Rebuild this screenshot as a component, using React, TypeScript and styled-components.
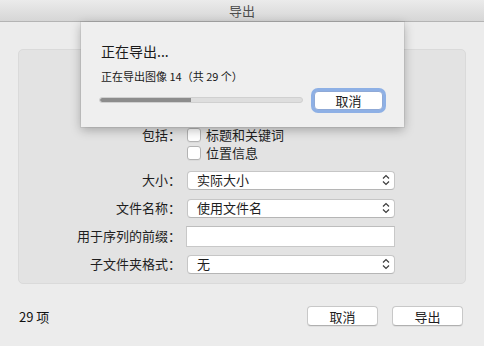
import React from "react";
import styled, { createGlobalStyle } from "styled-components";

const Global = createGlobalStyle`
  html, body { margin: 0; padding: 0; background: #ececec; }
  body { font-family: "Noto Sans CJK SC", "Noto Sans", "Liberation Sans", sans-serif; }
`;

const Window = styled.div`
  position: relative;
  width: 484px;
  height: 346px;
  background: #ececec;
  display: flex;
  flex-direction: column;
  overflow: hidden;
  color: #1e1e1e;
`;

const TitleBar = styled.div`
  height: 21px;
  flex: none;
  display: flex;
  align-items: center;
  justify-content: center;
  background: linear-gradient(#ebebeb, #d6d6d6);
  border-bottom: 1px solid #b4b4b4;
  font-size: 13px;
  color: #4d4d4d;
`;

const Body = styled.div`
  flex: 1;
  display: flex;
  flex-direction: column;
  padding: 27px 18px 0 18px;
`;

const GroupBox = styled.div`
  flex: none;
  height: 235px;
  box-sizing: border-box;
  background: #e3e3e3;
  border: 1px solid #dadada;
  border-radius: 5px;
  padding-top: 76px;
  display: flex;
  flex-direction: column;
`;

const Row = styled.div<{ $h: number; $mt?: number }>`
  display: grid;
  grid-template-columns: 162px 208px;
  column-gap: 6px;
  align-items: center;
  height: ${(p) => p.$h}px;
  margin-top: ${(p) => p.$mt ?? 0}px;
`;

const Label = styled.div`
  text-align: right;
  font-size: 13px;
  line-height: 16px;
  color: #1e1e1e;
`;

const CheckLine = styled.label`
  display: flex;
  align-items: center;
  gap: 5px;
  font-size: 13px;
  line-height: 16px;
`;

const CheckBox = styled.span`
  width: 12px;
  height: 12px;
  background: #fff;
  border: 1px solid #b3b3b3;
  border-radius: 3px;
  box-shadow: 0 1px 0 rgba(0, 0, 0, 0.04);
`;

const Select = styled.div`
  height: 19px;
  box-sizing: border-box;
  background: #fff;
  border: 1px solid #c6c6c6;
  border-bottom-color: #b5b5b5;
  border-radius: 4px;
  display: flex;
  align-items: center;
  justify-content: space-between;
  padding: 0 4px 0 9px;
  font-size: 13px;
  line-height: 16px;
`;

const TextField = styled.div`
  height: 21px;
  box-sizing: border-box;
  background: #fff;
  border: 1px solid #c8c8c8;
  border-top-color: #bdbdbd;
  margin-left: -1px;
`;

const Footer = styled.div`
  display: flex;
  align-items: center;
  margin-top: 22px;
  height: 20px;
  padding: 0 3px 0 1px;
`;

const Count = styled.div`
  flex: 1;
  font-size: 13px;
  color: #111;
`;

const Button = styled.div<{ $focus?: boolean }>`
  width: ${(p) => (p.$focus ? 69 : 71)}px;
  height: ${(p) => (p.$focus ? 19 : 20)}px;
  box-sizing: border-box;
  background: #fff;
  border: 1px solid ${(p) => (p.$focus ? "#8fa9d6" : "#c8c8c8")};
  border-bottom-color: ${(p) => (p.$focus ? "#8fa9d6" : "#b0b0b0")};
  border-radius: 4px;
  display: flex;
  align-items: center;
  justify-content: center;
  font-size: 13px;
  color: #1e1e1e;
  box-shadow: ${(p) =>
    p.$focus ? "0 0 0 3px rgba(110, 155, 225, 0.75)" : "0 1px 0 rgba(0,0,0,0.05)"};
  & + & {
    margin-left: 14px;
  }
`;

const Sheet = styled.div`
  position: absolute;
  left: 81px;
  top: 22px;
  width: 323px;
  height: 105px;
  box-sizing: border-box;
  background: #efefef;
  box-shadow: 0 3px 10px rgba(0, 0, 0, 0.28), 0 0 0 1px rgba(0, 0, 0, 0.06);
  padding: 19px 19px 0 20px;
  display: flex;
  flex-direction: column;
`;

const SheetTitle = styled.div`
  font-size: 14px;
  line-height: 20px;
  color: #1a1a1a;
`;

const SheetSub = styled.div`
  font-size: 11px;
  line-height: 14px;
  margin-top: 8px;
  color: #1a1a1a;
`;

const ProgressRow = styled.div`
  display: flex;
  align-items: center;
  margin-top: 5px;
  height: 24px;
  margin-left: -2px;
`;

const Track = styled.div`
  width: 204px;
  height: 6px;
  box-sizing: border-box;
  border-radius: 3px;
  background: #dedede;
  border: 1px solid #d0d0d0;
  overflow: hidden;
  margin-right: 11px;
`;

const Fill = styled.div`
  height: 100%;
  background: #8c8c8c;
  border-radius: 3px 0 0 3px;
`;

const Arrows = () => (
  <svg width="8" height="12" viewBox="0 0 8 12">
    <path d="M1 4.5 L4 1.5 L7 4.5" fill="none" stroke="#3c3c3c" strokeWidth="1.2" />
    <path d="M1 7.5 L4 10.5 L7 7.5" fill="none" stroke="#3c3c3c" strokeWidth="1.2" />
  </svg>
);

export default function App() {
  const progress = 14 / 29;
  return (
    <>
      <Global />
      <Window>
        <TitleBar>导出</TitleBar>
        <Body>
          <GroupBox>
            <Row $h={18}>
              <Label>包括：</Label>
              <CheckLine>
                <CheckBox />
                标题和关键词
              </CheckLine>
            </Row>
            <Row $h={18}>
              <div />
              <CheckLine>
                <CheckBox />
                位置信息
              </CheckLine>
            </Row>
            <Row $h={28} $mt={4}>
              <Label>大小：</Label>
              <Select>
                实际大小
                <Arrows />
              </Select>
            </Row>
            <Row $h={28}>
              <Label>文件名称：</Label>
              <Select>
                使用文件名
                <Arrows />
              </Select>
            </Row>
            <Row $h={28}>
              <Label>用于序列的前缀：</Label>
              <TextField />
            </Row>
            <Row $h={28}>
              <Label>子文件夹格式：</Label>
              <Select>
                无
                <Arrows />
              </Select>
            </Row>
          </GroupBox>
          <Footer>
            <Count>29 项</Count>
            <Button>取消</Button>
            <Button>导出</Button>
          </Footer>
        </Body>
        <Sheet>
          <SheetTitle>正在导出...</SheetTitle>
          <SheetSub>正在导出图像 14（共 29 个）</SheetSub>
          <ProgressRow>
            <Track>
              <Fill style={{ width: `${progress * 93}%` }} />
            </Track>
            <Button $focus>取消</Button>
          </ProgressRow>
        </Sheet>
      </Window>
    </>
  );
}
